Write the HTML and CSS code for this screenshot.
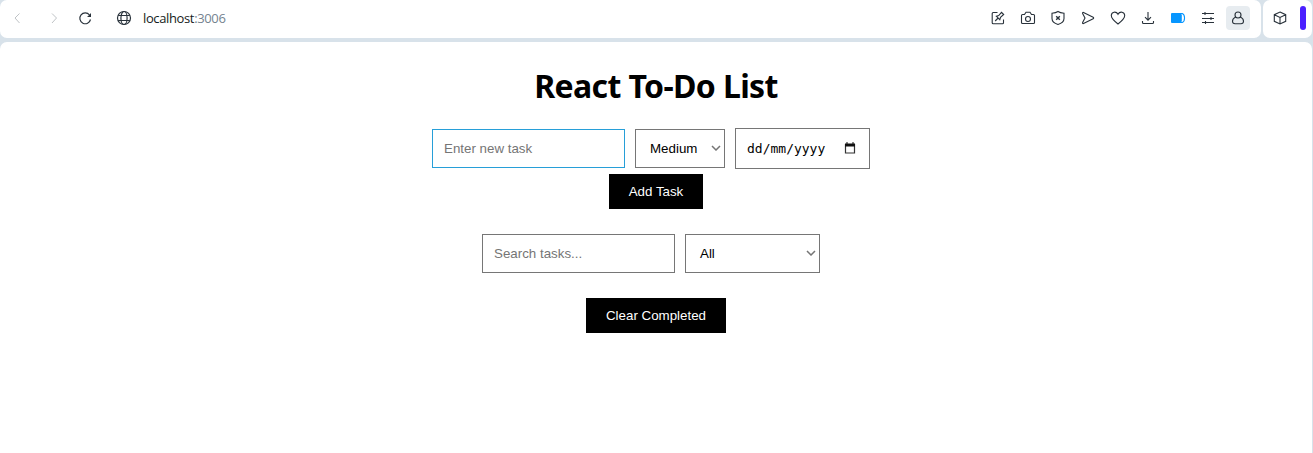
FILE: index.html
```html
<!DOCTYPE html>
<html lang="en">
<head>
<meta charset="utf-8">
<title>React To-Do List</title>
<link rel="stylesheet" href="styles.css">
</head>
<body>
<header class="browser-bar">
  <div class="toolbar">
    <nav class="navigation">
      <svg class="icon muted" viewBox="0 0 16 16"><path d="M10.500 3.500 6 8l4.500 5"/></svg>
      <svg class="icon muted" viewBox="0 0 16 16"><path d="m6 3.500 4.500 4.500L6 13"/></svg>
      <svg class="icon reload" viewBox="0 0 16 16"><path d="M13.500 9.500A5.400 5.400 0 1 1 12.500 5"/><path class="solid" d="M14 3v4h-4l1.600-1.500L14 3z"/></svg>
    </nav>
    <div class="address">
      <svg class="icon globe" viewBox="0 0 16 16"><circle cx="8" cy="8" r="6.500"/><ellipse cx="8" cy="8" rx="3.100" ry="6.500"/><path d="M2.200 5.500h11.600M2.200 10.500h11.600"/></svg>
      <span class="url">localhost<span class="port">:3006</span></span>
    </div>
    <div class="actions">
      <svg class="icon" viewBox="0 0 16 16"><path d="M7.500 2.500H3.200a1 1 0 0 0-1 1v9.300a1 1 0 0 0 1 1h9.300a1 1 0 0 0 1-1V9.500M5.200 11l2.900-3M6.300 6.200l3.500 3.500.7-2.300 3.200-2.900L11.500 2.300 8.700 5.500z"/></svg>
      <svg class="icon" viewBox="0 0 16 16"><path d="M2.500 4.500h2L6 2.300h4l1.500 2.200h2a1 1 0 0 1 1 1v7a1 1 0 0 1-1 1h-11a1 1 0 0 1-1-1v-7a1 1 0 0 1 1-1Z"/><circle cx="8" cy="9" r="2.500"/></svg>
      <svg class="icon" viewBox="0 0 16 16"><path d="M8 1.500c1.500 1 3.700 1.500 6 1.700v5.300c0 3-2.800 5-6 6-3.200-1-6-3-6-6V3.200c2.300-.2 4.500-.7 6-1.700Z"/><path class="strong" d="m6.200 6.200 3.600 3.600m0-3.600L6.200 9.800"/></svg>
      <svg class="icon" viewBox="0 0 16 16"><path d="M3.500 2.500 13.200 7.300c.6.300.6 1.100 0 1.400L3.500 13.500c-.7.300-1.200-.2-.9-.9L5 8 2.600 3.400c-.3-.7.200-1.200.9-.9Z"/></svg>
      <svg class="icon" viewBox="0 0 16 16"><path d="M8 14C4.400 11.300 1.300 8.500 1.300 5.600c0-4 4.900-4.700 6.700-1.300 1.800-3.400 6.700-2.700 6.700 1.300C14.700 8.500 11.600 11.300 8 14Z"/></svg>
      <svg class="icon" viewBox="0 0 16 16"><path d="M2.500 11v1.500a1 1 0 0 0 1 1h9a1 1 0 0 0 1-1V11"/><path d="M8 2v8M5 7.200l3 3 3-3"/></svg>
      <svg class="icon battery" viewBox="0 0 16 16"><path class="charge" d="M2 3h9l.8 2v6l-.8 2H2a1 1 0 0 1-1-1V4a1 1 0 0 1 1-1Z"/><path d="M11 3.500h1.300c3 1.200 3 7.800 0 9H11"/></svg>
      <svg class="icon" viewBox="0 0 16 16"><path d="M2 3.500h12M2 8.500h12M2 12.500h12M5 2v3M11 7v3M5.500 11v3"/></svg>
      <span class="profile"><svg class="icon" viewBox="0 0 16 16"><circle cx="8" cy="5" r="3"/><path d="M5.700 7C3.700 7.900 2.500 9.500 2.500 11.300c0 1.700.8 2.500 2.600 2.500h5.800c1.800 0 2.600-.8 2.600-2.500 0-1.800-1.200-3.400-3.200-4.300"/></svg></span>
    </div>
  </div>
  <div class="extension">
    <svg class="icon" viewBox="0 0 16 16"><path d="m8 2 5.700 2.700v6.600L8 14l-5.700-2.700V4.700L8 2Zm0 5.500V14M2.300 4.700 8 7.500l5.700-2.800"/></svg>
    <span class="sidebar-handle"></span>
  </div>
</header>
<main class="page">
  <h1>React To-Do List</h1>
  <form class="task-form">
    <div class="fields">
      <input class="field task-name" type="text" placeholder="Enter new task" aria-label="New task">
      <div class="field select priority"><span>Medium</span><svg class="chevron" viewBox="0 0 10 6"><path d="m1 1 4 4 4-4"/></svg></div>
      <div class="field date"><span>dd/mm/yyyy</span><svg class="calendar" viewBox="0 0 12 12"><path d="M1.500 2.500h9v8.500h-9z"/><path class="calendar-top" d="M1 1.500h1.500V0h1v1.500h5V0h1v1.500H11v3H1z"/></svg></div>
    </div>
    <button type="button" class="button add">Add Task</button>
  </form>
  <div class="fields filters">
    <input class="field" type="text" placeholder="Search tasks..." aria-label="Search tasks">
    <div class="field select status"><span>All</span><svg class="chevron" viewBox="0 0 10 6"><path d="m1 1 4 4 4-4"/></svg></div>
  </div>
  <button type="button" class="button clear">Clear Completed</button>
</main>
</body>
</html>
```
FILE: styles.css
```css
* { box-sizing: border-box; }
body {
  display: flex;
  flex-direction: column;
  gap: 4px;
  height: 453px;
  margin: 0;
  overflow: hidden;
  background: #d8e2ea;
  color: #000;
}
.browser-bar { display: flex; gap: 2px; height: 38px; padding-right: 1px; }
.toolbar {
  display: flex;
  align-items: center;
  flex: 1;
  padding: 0 11px 2px 9px;
  border-radius: 7px;
  background: #fff;
}
.icon {
  display: block;
  width: 16px;
  height: 16px;
  flex: none;
  fill: none;
  stroke: #29323b;
  stroke-width: 1.1;
}
.muted { stroke: #bfc3c6; stroke-width: 1; }
.reload { stroke-width: 1.2; }
.solid { fill: #29323b; stroke: none; }
.strong { stroke-width: 1.4; }
.navigation { display: flex; gap: 21px; }
.navigation .reload { margin-left: -6px; }
.address { display: flex; align-items: center; gap: 11px; margin-left: 23px; }
.globe { stroke-width: 1.2; }
.url {
  font: 13px/18px "Open Sans", "Noto Sans", sans-serif;
  letter-spacing: -.37px;
  color: #151b20;
}
.port { color: #75838f; }
.actions { display: flex; align-items: center; gap: 14px; margin-left: auto; }
.battery { stroke: #0796ff; }
.charge { fill: #0796ff; stroke: none; }
.profile {
  display: grid;
  place-items: center;
  width: 24px;
  height: 24px;
  margin-left: -4px;
  border-radius: 4px;
  background: #e7ecf0;
}
.extension {
  display: flex;
  align-items: center;
  justify-content: space-between;
  width: 49px;
  padding: 0 6px 2px 9px;
  border-radius: 7px;
  background: #fff;
}
.sidebar-handle { width: 6px; height: 24px; border-radius: 3px; background: #4b20ff; }
.page {
  display: flex;
  flex-direction: column;
  align-items: center;
  flex: 1;
  margin-right: 1px;
  padding-top: 22px;
  border-radius: 7px 7px 0 0;
  background: #fff;
}
h1 {
  margin: 0 0 20px;
  font: bold 32px/44px "Noto Sans", "Open Sans", sans-serif;
  letter-spacing: -.62px;
  white-space: nowrap;
}
.task-form { display: flex; flex-direction: column; align-items: center; gap: 5px; }
.fields { display: flex; align-items: center; gap: 10px; margin-right: 10px; }
.field {
  width: 193px;
  height: 39px;
  padding: 0 11px;
  border: 1px solid #767676;
  border-radius: 0;
  background: #fff;
  color: #000;
  font: 13.333px/15px "Liberation Sans", Arial, sans-serif;
}
.field::placeholder { color: #757575; opacity: 1; }
.task-name { border: 1px solid #279fd8; }
.select { display: flex; align-items: center; justify-content: space-between; padding: 0 3px 1px 14px; }
.priority { width: 90px; }
.status { width: 135px; }
.chevron { width: 10px; height: 6px; fill: none; stroke: #757575; stroke-width: 1.5; }
.date {
  display: flex;
  align-items: center;
  justify-content: space-between;
  width: 135px;
  height: 41px;
  padding: 1px 13px 0 11px;
  font: 13px/16px "DejaVu Sans Mono", monospace;
}
.calendar { width: 12px; height: 12px; margin-bottom: 2px; fill: none; stroke: #333; stroke-width: 1.2; }
.calendar-top { fill: #111; stroke: none; }
.button {
  height: 35px;
  padding: 0;
  border: 0;
  border-radius: 0;
  background: #000;
  color: #fff;
  font: 13.333px/15px "Liberation Sans", Arial, sans-serif;
}
.add { width: 94px; }
.clear { width: 140px; }
.filters { margin: 25px 10px 25px 0; }
```
